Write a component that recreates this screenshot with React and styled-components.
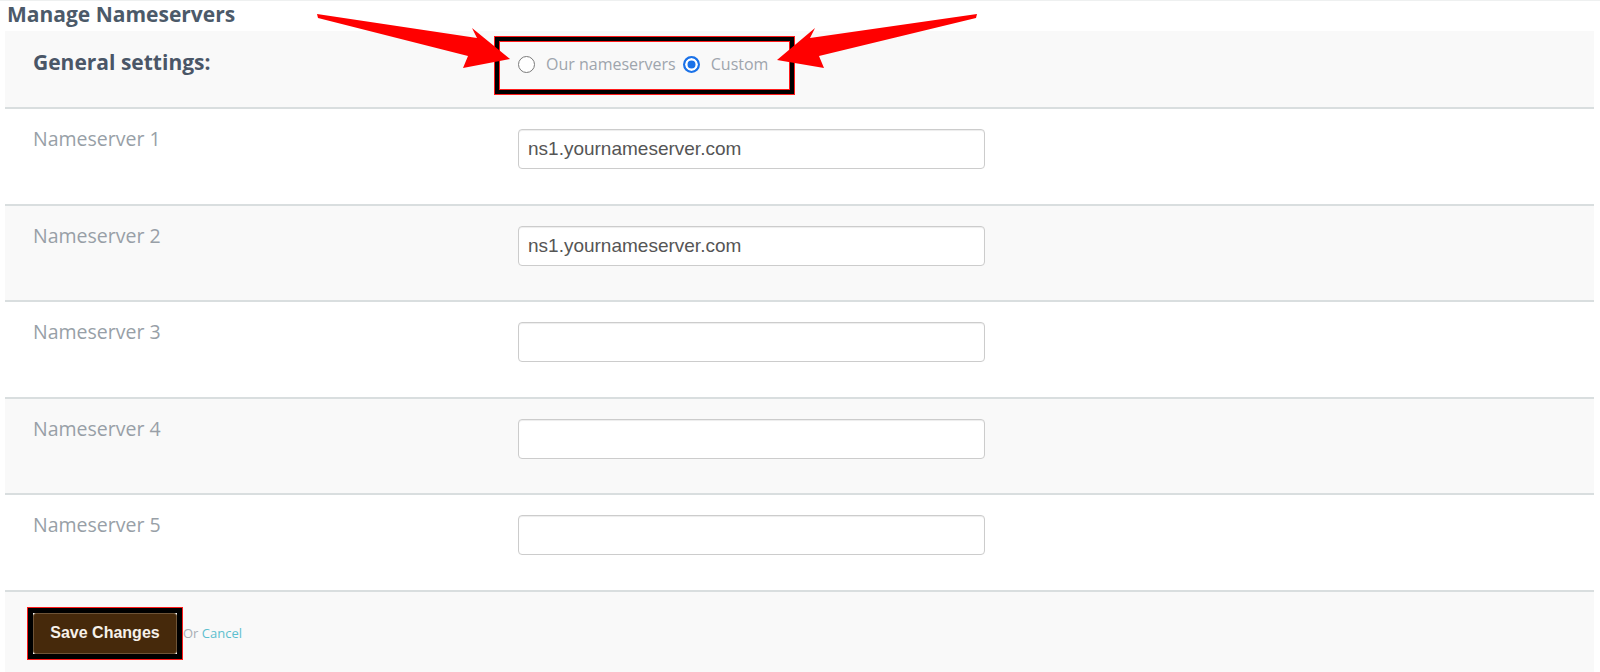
import React from 'react';
import styled, { createGlobalStyle } from 'styled-components';

const Global = createGlobalStyle`
  html, body { margin: 0; padding: 0; background: #ffffff; }
  body { font-family: "Open Sans", "Noto Sans", sans-serif; }
  * { box-sizing: border-box; }
`;

const Page = styled.div`
  position: relative;
  width: 1600px;
  height: 672px;
  overflow: hidden;
  border-top: 1px solid #eef0f0;
`;

const Panel = styled.div`
  margin: 0 6px 0 5px;
`;

const Title = styled.h2`
  margin: 0 0 3px 0;
  padding-left: 2px;
  font-family: "Open Sans", sans-serif;
  font-weight: 700;
  font-size: 21px;
  line-height: 27px;
  color: #4c5a69;
`;

const Header = styled.div`
  display: grid;
  grid-template-columns: 485px auto;
  align-items: start;
  height: 78px;
  padding-left: 28px;
  background: #f9f9f9;
  border-bottom: 2px solid #d9dedf;
`;

const HeaderLabel = styled.div`
  padding-top: 18px;
  font-weight: 700;
  font-size: 21px;
  line-height: 26px;
  color: #4a5667;
`;

const AnnotatedBox = styled.div`
  justify-self: start;
  display: inline-flex;
  align-items: center;
  gap: 7px;
  height: 57px;
  margin-top: 6px;
  margin-left: -23px;
  padding: 0 22px 3px 19px;
  border: 4px solid #000;
  box-shadow: 0 0 0 1px #ff1a1a, inset 0 0 0 1px #ff1a1a;
`;

const RadioOption = styled.label`
  display: inline-flex;
  align-items: center;
  gap: 11px;
  font-size: 16px;
  line-height: 22px;
  color: #9ea5ad;
  cursor: pointer;
`;

const RadioDot = styled.span`
  display: inline-block;
  width: 17px;
  height: 17px;
  border-radius: 50%;
  border: ${(p) => (p.$checked ? '2px solid #1b72e8' : '1.5px solid #7a7a7a')};
  background: ${(p) => (p.$checked ? '#1b72e8' : '#ffffff')};
  box-shadow: ${(p) => (p.$checked ? 'inset 0 0 0 2.5px #ffffff' : 'none')};
`;

const Row = styled.div`
  display: grid;
  grid-template-columns: 485px 467px;
  align-items: start;
  height: 96.6px;
  padding-left: 28px;
  background: ${(p) => (p.$alt ? '#f9f9f9' : '#ffffff')};
  border-bottom: 2px solid #d9dedf;
`;

const RowLabel = styled.div`
  padding-top: 17px;
  font-size: 19.5px;
  line-height: 26px;
  color: #989fa7;
`;

const TextInput = styled.input`
  margin-top: 20px;
  width: 467px;
  height: 40px;
  padding: 0 9px;
  border: 1px solid #cccccc;
  border-radius: 4px;
  background: #ffffff;
  box-shadow: inset 0 1px 1px rgba(0, 0, 0, 0.075);
  font-family: "Liberation Sans", Arial, sans-serif;
  font-size: 19px;
  color: #555555;
  outline: none;
`;

const Footer = styled.div`
  height: 90px;
  padding: 16px 0 0 23px;
  background: #f9f9f9;
`;

const Actions = styled.div`
  display: flex;
  align-items: center;
`;

const ButtonFrame = styled.div`
  display: inline-flex;
  border: 5px solid #000;
  box-shadow: 0 0 0 1px #ff1a1a;
`;

const SaveButton = styled.button`
  width: 144px;
  height: 41px;
  padding: 0;
  border: 1px solid #6f5437;
  border-radius: 3px;
  background: #46290b;
  color: #f7f1ea;
  font-family: "Liberation Sans", Arial, sans-serif;
  font-weight: 700;
  font-size: 16px;
  cursor: pointer;
`;

const AltAction = styled.span`
  margin-left: 1px;
  font-size: 13px;
  color: #a8aeb4;
`;

const CancelLink = styled.a`
  color: #5cbfcf;
  text-decoration: none;
`;

const Overlay = styled.svg`
  position: absolute;
  left: 0;
  top: 0;
  pointer-events: none;
`;

const servers = [
  'ns1.yournameserver.com',
  'ns1.yournameserver.com',
  '',
  '',
  '',
];

export default function App() {
  return (
    <>
      <Global />
      <Page>
        <Panel>
          <Title>Manage Nameservers</Title>
          <Header>
            <HeaderLabel>General settings:</HeaderLabel>
            <AnnotatedBox>
              <RadioOption>
                <RadioDot />
                Our nameservers
              </RadioOption>
              <RadioOption>
                <RadioDot $checked />
                Custom
              </RadioOption>
            </AnnotatedBox>
          </Header>
          {servers.map((v, i) => (
            <Row key={i} $alt={i % 2 === 1}>
              <RowLabel>Nameserver {i + 1}</RowLabel>
              <TextInput defaultValue={v} />
            </Row>
          ))}
          <Footer>
            <Actions>
              <ButtonFrame>
                <SaveButton>Save Changes</SaveButton>
              </ButtonFrame>
              <AltAction>
                Or <CancelLink href="#">Cancel</CancelLink>
              </AltAction>
            </Actions>
          </Footer>
        </Panel>
        <Overlay width="1600" height="672" viewBox="0 0 1600 672">
          <polygon
            fill="#ff0000"
            points="317,13 477,37 472,27 510,58 463,67 468,55 318,17"
          />
          <polygon
            fill="#ff0000"
            points="977,13 810,37 815,27 777,59 824,67 819,55 976,17"
          />
        </Overlay>
      </Page>
    </>
  );
}
